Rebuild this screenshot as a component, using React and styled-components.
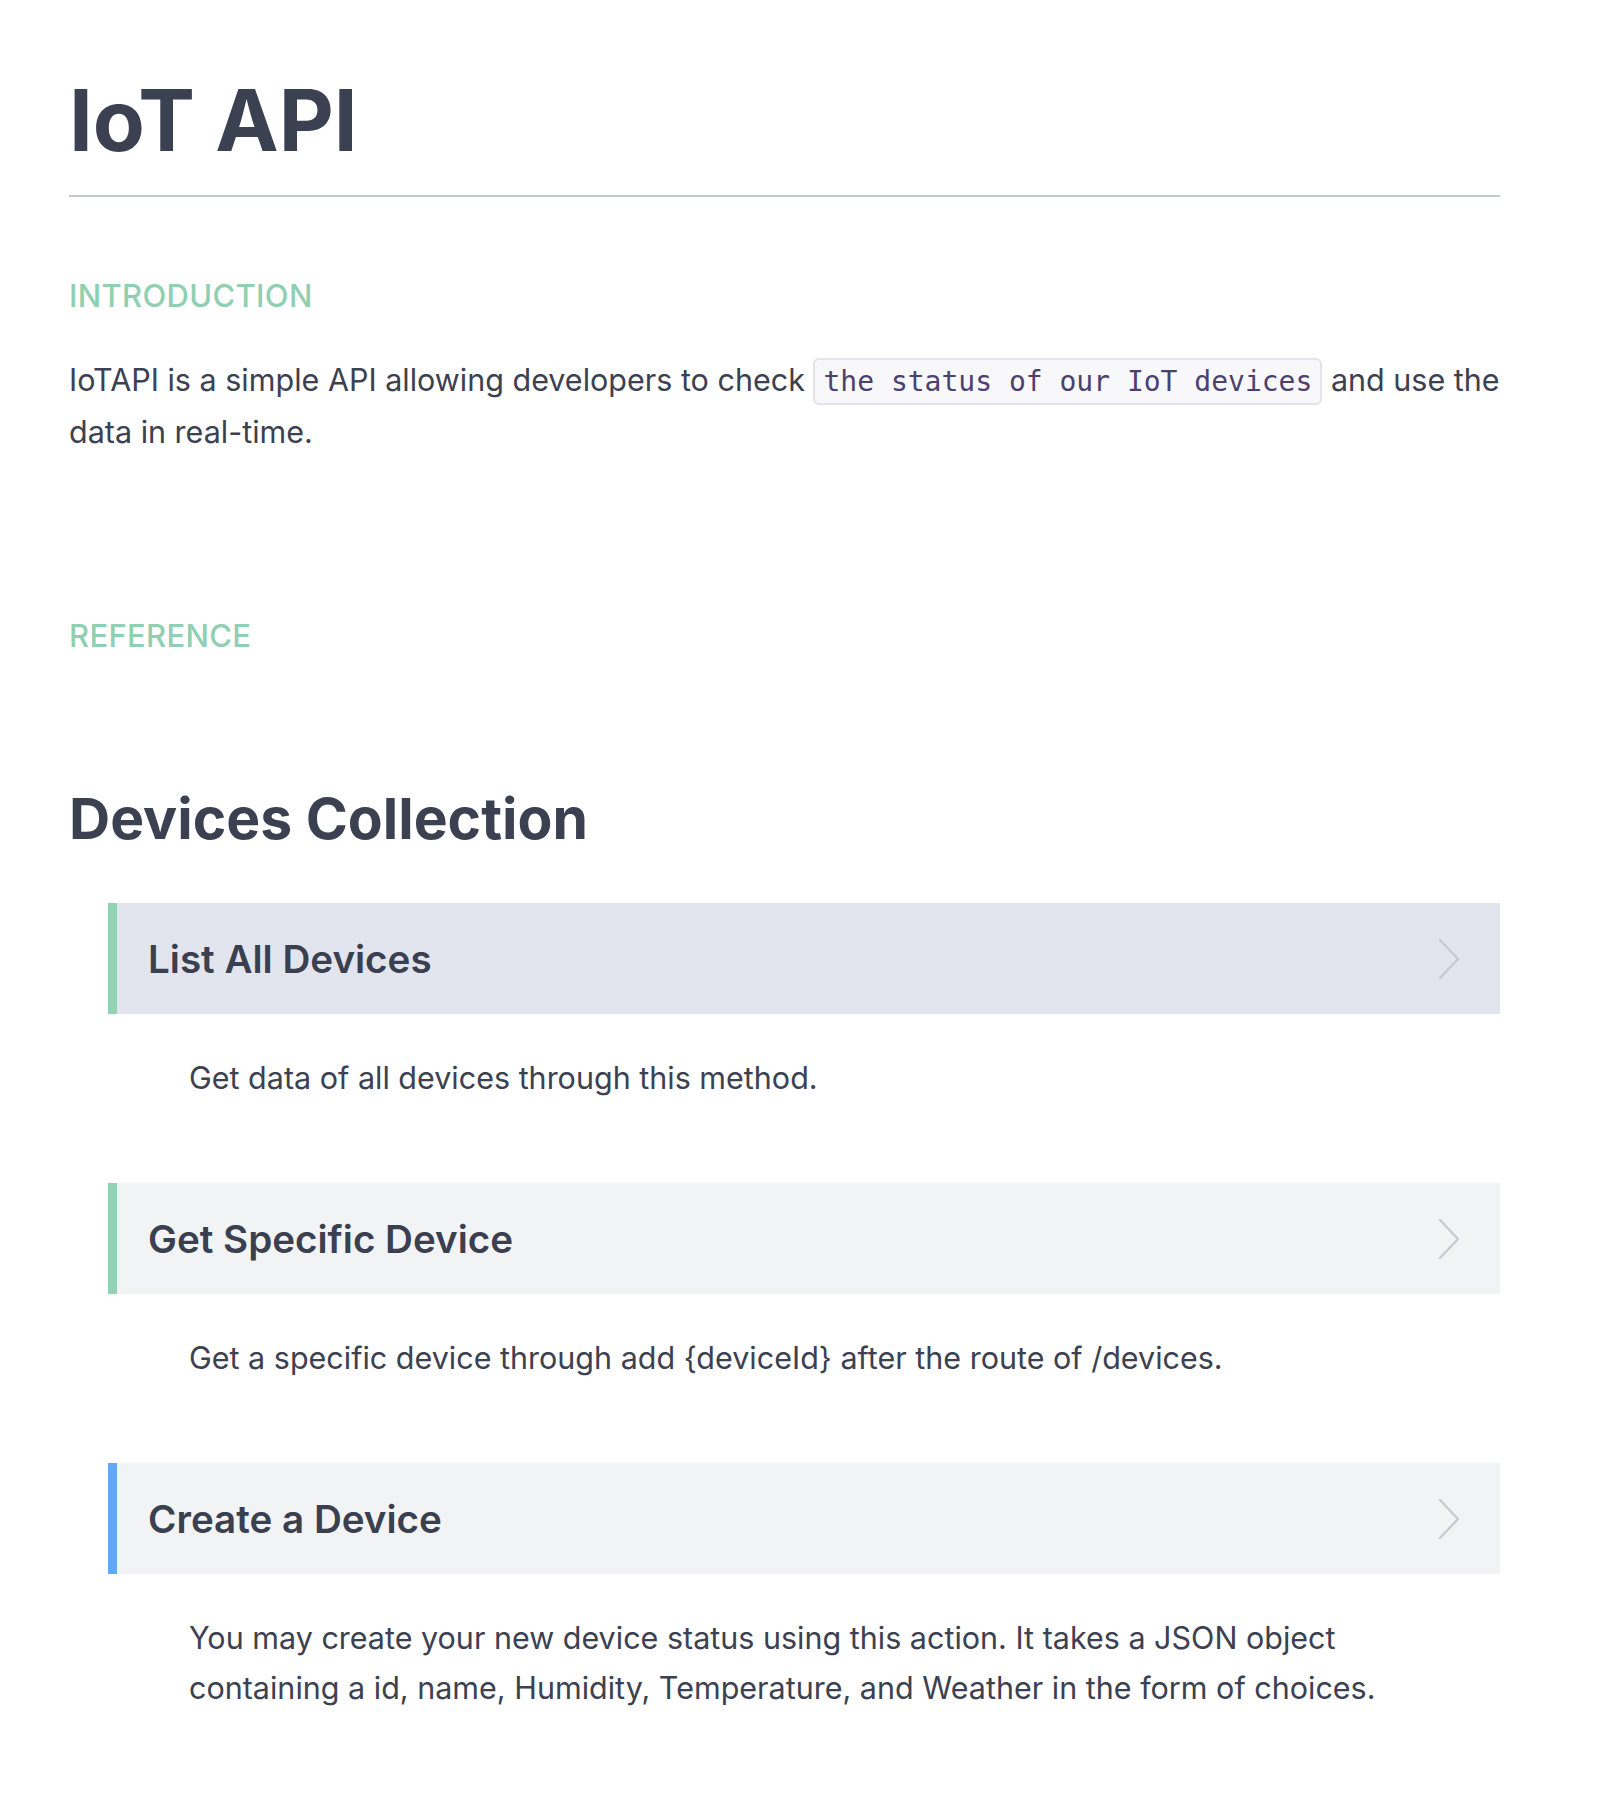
import React from 'react';
import styled, { createGlobalStyle } from 'styled-components';

const endpoints = [
  {
    id: 'list',
    title: 'List All Devices',
    accent: '#93d2b5',
    active: true,
    text: 'Get data of all devices through this method.',
  },
  {
    id: 'get',
    title: 'Get Specific Device',
    accent: '#93d2b5',
    text: 'Get a specific device through add {deviceId} after the route of /devices.',
  },
  {
    id: 'create',
    title: 'Create a Device',
    accent: '#64a7f6',
    text: 'You may create your new device status using this action. It takes a JSON object containing a id, name, Humidity, Temperature, and Weather in the form of choices.',
  },
];

function Chevron() {
  return (
    <svg width="24" height="42" viewBox="0 0 24 42" fill="none">
      <polyline
        points="3,2 21,21 3,40"
        stroke="#c5c9d3"
        strokeWidth="2.2"
        strokeLinecap="round"
        strokeLinejoin="round"
      />
    </svg>
  );
}

function App() {
  return (
    <>
      <GlobalStyle />
      <Page>
        <Title>IoT API</Title>
        <Rule />
        <Label>INTRODUCTION</Label>
        <Intro>
          IoTAPI is a simple API allowing developers to check{' '}
          <Code>the status of our IoT devices</Code> and use the data in real-time.
        </Intro>
        <Label $gap="161px">REFERENCE</Label>
        <Collection>Devices Collection</Collection>
        <Endpoints>
          {endpoints.map((item) => (
            <li key={item.id}>
              <EndpointHeader $accent={item.accent} $active={item.active}>
                <h3>{item.title}</h3>
                <Chevron />
              </EndpointHeader>
              <Description>{item.text}</Description>
            </li>
          ))}
        </Endpoints>
      </Page>
    </>
  );
}

const GlobalStyle = createGlobalStyle`
  body {
    margin: 0;
    background: #ffffff;
    font-family: Inter, "Noto Sans", sans-serif;
    color: #3c4151;
  }
`;

const Page = styled.main`
  padding: 78px 104px 80px 69px;
`;

const Title = styled.h1`
  margin: 0;
  font-size: 85px;
  line-height: 86px;
  font-weight: 700;
  color: #3c4151;
`;

const Rule = styled.hr`
  margin: 31px 0 0;
  border: 0;
  height: 2px;
  background: #c4c8d3;
`;

const Label = styled.h2`
  margin: ${(p) => p.$gap || '81px'} 0 0;
  font-size: 31px;
  line-height: 36px;
  font-weight: 500;
  letter-spacing: 0.01em;
  color: #8fcfb2;
`;

const Intro = styled.p`
  margin: 41px 0 0;
  font-size: 30.5px;
  line-height: 50px;
  color: #3c4151;
`;

const Code = styled.code`
  font-family: "DejaVu Sans Mono", "Liberation Mono", monospace;
  font-size: 28px;
  color: #4b416f;
  background: #f8f8fb;
  border: 2px solid #e3e3ea;
  border-radius: 6px;
  padding: 5px 8px;
`;

const Collection = styled.h2`
  margin: 132px 0 0;
  font-size: 57px;
  line-height: 66px;
  font-weight: 700;
  color: #3c4151;
`;

const Endpoints = styled.ul`
  list-style: none;
  margin: 51px 0 0 39px;
  padding: 0;
`;

const EndpointHeader = styled.div`
  display: flex;
  align-items: center;
  justify-content: space-between;
  height: 111px;
  padding: 0 39px 0 31px;
  border-left: 9px solid ${(p) => p.$accent};
  background: ${(p) => (p.$active ? '#e2e5ee' : '#f2f3f5')};
  h3 {
    margin: 0;
    font-size: 38.6px;
    font-weight: 600;
    color: #3b4050;
  }
`;

const Description = styled.p`
  margin: 39px 0 80px;
  padding: 0 110px 0 81px;
  font-size: 30.5px;
  line-height: 50px;
  color: #3c4151;
`;

export default App;
